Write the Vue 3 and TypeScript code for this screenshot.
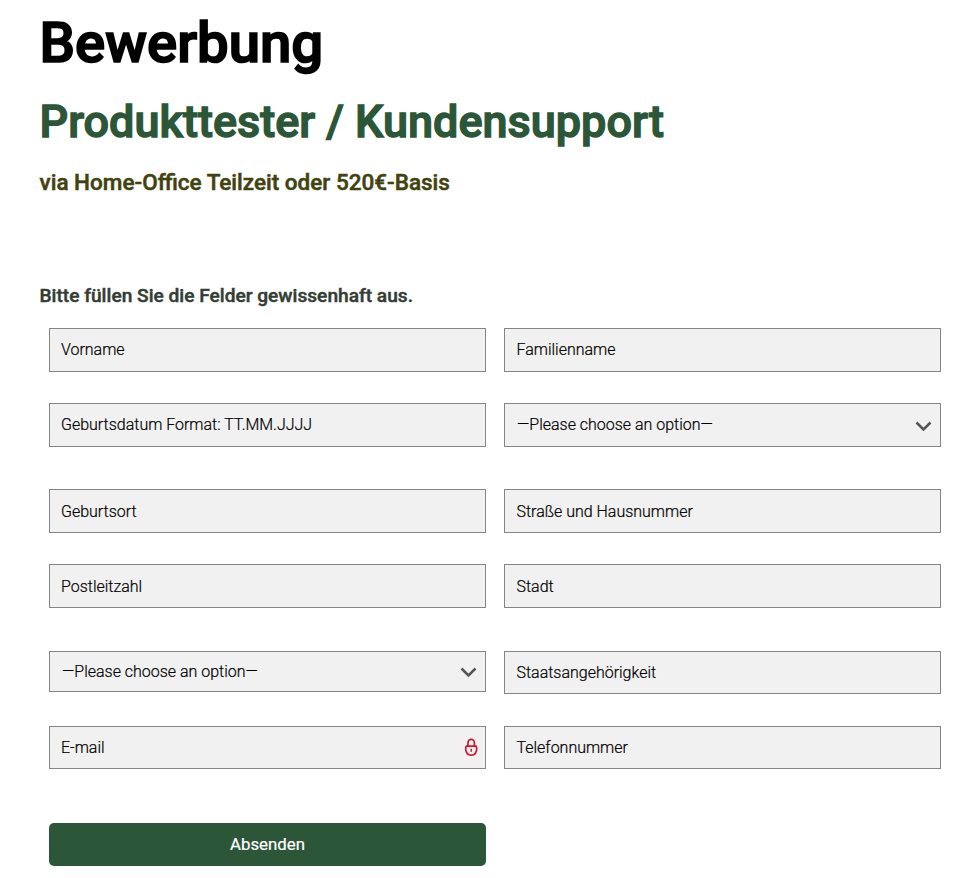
<script setup lang="ts">
interface Field { label: string; select?: boolean; lock?: boolean }
interface Row { fields: Field[]; kind: string }
const rows: Row[] = [
  { kind: 'r1', fields: [{ label: 'Vorname' }, { label: 'Familienname' }] },
  { kind: 'r2', fields: [{ label: 'Geburtsdatum Format: TT.MM.JJJJ' }, { label: '—Please choose an option—', select: true }] },
  { kind: 'r3', fields: [{ label: 'Geburtsort' }, { label: 'Straße und Hausnummer' }] },
  { kind: 'r4', fields: [{ label: 'Postleitzahl' }, { label: 'Stadt' }] },
  { kind: 'r5', fields: [{ label: '—Please choose an option—', select: true }, { label: 'Staatsangehörigkeit' }] },
  { kind: 'r6', fields: [{ label: 'E-mail', lock: true }, { label: 'Telefonnummer' }] },
]
</script>

<template>
  <main class="page">
    <h1>Bewerbung</h1>
    <h2>Produkttester / Kundensupport</h2>
    <h3>via Home-Office Teilzeit oder 520€-Basis</h3>
    <p class="hint">Bitte füllen Sie die Felder gewissenhaft aus.</p>
    <form class="form" @submit.prevent>
      <div v-for="row in rows" :key="row.kind" class="row" :class="row.kind">
        <div v-for="f in row.fields" :key="f.label" class="field" :class="{ select: f.select }">
          <span>{{ f.label }}</span>
          <svg v-if="f.select" class="chevron" width="17" height="11" viewBox="0 0 17 11"><path d="M1.5 1.5 8.5 8.5 15.5 1.5" /></svg>
          <svg v-if="f.lock" class="lock" width="14" height="19" viewBox="0 0 14 19"><path d="M4 8V4.500a3.200 3.200 0 0 1 6.400 0V8" /><path d="M2.300 8.200h9.800c.7 1.500.7 3.400.2 5-.7 2.200-2.600 4-5.100 4s-4.400-1.800-5.100-4c-.5-1.600-.5-3.500.2-5z" /><path class="keyhole" d="M7.200 10.700v3" /></svg>
        </div>
      </div>
      <button type="submit">Absenden</button>
    </form>
  </main>
</template>

<style>
body { background: #fff; }
</style>
<style scoped>
.page { box-sizing: border-box; height: 878px; padding: 9px 30px 0 39.5px; font-family: Roboto, "Liberation Sans", sans-serif; overflow: hidden; }
h1, h2, h3, .hint { margin: 0; font-weight: 500; white-space: nowrap; -webkit-text-stroke: 0.03em currentColor; }
h1 { font-size: 56.3px; line-height: 68px; color: #000; }
h2 { margin-top: 15px; font-size: 45px; line-height: 60px; color: #2b5638; }
h3 { margin-top: 15px; font-size: 22.5px; line-height: 30px; color: #42420f; -webkit-text-stroke-width: 0.5px; }
.hint { margin-top: 86px; font-size: 19.150px; line-height: 26px; color: #333d33; -webkit-text-stroke-width: 0.45px; }
.form { display: flex; flex-direction: column; padding: 19px 0 0 9.5px; }
.row { display: grid; grid-template-columns: 437px 437px; column-gap: 18px; align-items: start; height: 44px; }
.r2, .r4 { margin-top: 31px; }
.r3 { margin-top: 42px; }
.r5 { margin-top: 43px; height: 43px; }
.r6 { margin-top: 32px; height: 43px; }
.field { box-sizing: border-box; display: flex; align-items: center; justify-content: space-between; height: 100%; padding: 0 8px 1px 11px; border: 1px solid #858585; background: #f1f1f1; font-size: 15.970px; font-weight: 300; color: #000; -webkit-text-stroke: 0.2px #000; }
.field:last-child { padding-left: 11.5px; }
.r3 .field, .r4 .field { padding-bottom: 0; padding-top: 1px; }
.field.select { padding-left: 12px; }
.r5 .select { height: 41px; }
.chevron { margin-top: 3px; fill: none; stroke: #555; stroke-width: 2.5; }
.lock { margin-right: -1px; fill: none; stroke: #cf1830; stroke-width: 1.7; }
.keyhole { stroke-width: 1.5; }
button { width: 437px; height: 43px; margin-top: 54px; padding: 0 0 2px; border: 0; border-radius: 5px; background: #2b5638; color: #fff; font: 400 16.8px Roboto, sans-serif; -webkit-text-stroke: 0.2px #fff; }
</style>
